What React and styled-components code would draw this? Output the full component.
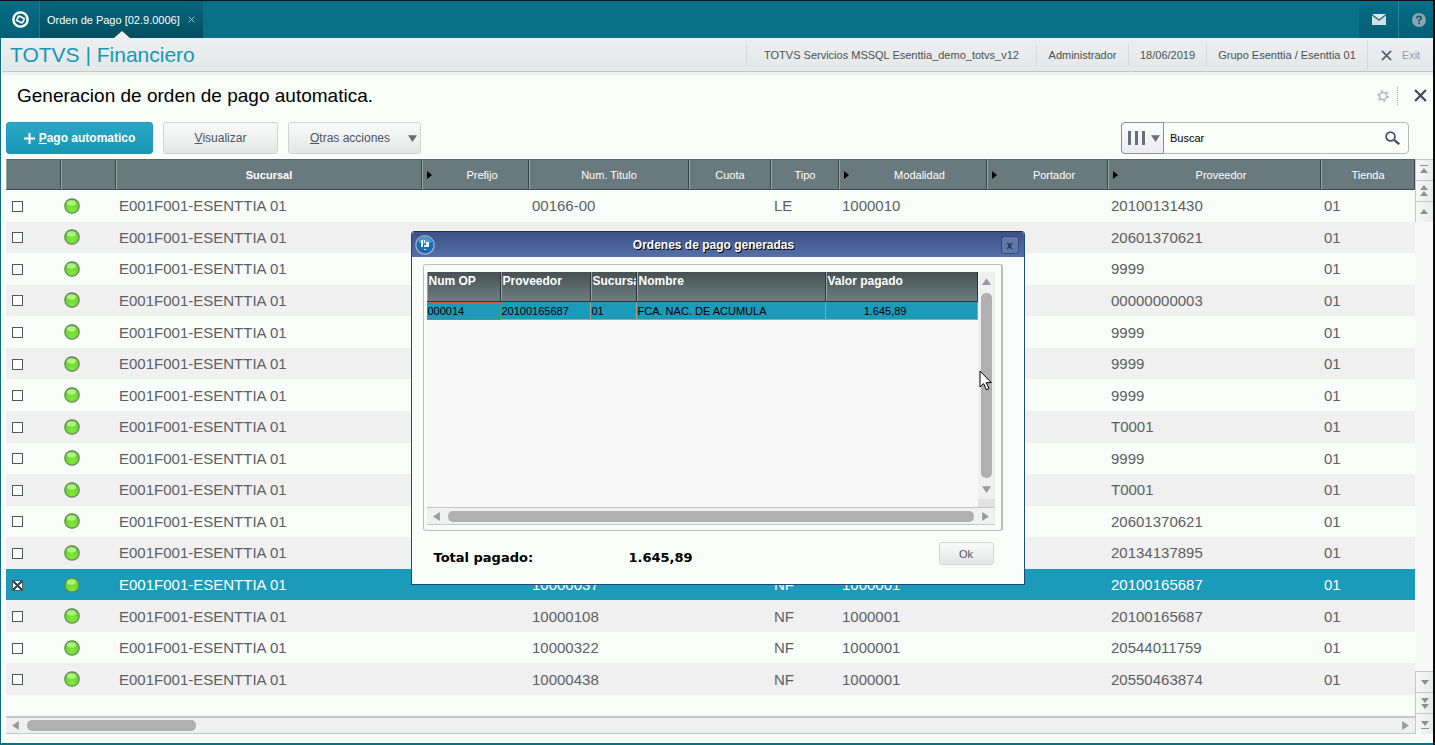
import React, {useState} from "react";
import styled, {createGlobalStyle} from 'styled-components';

const GlobalStyle = createGlobalStyle`
  * {
    box-sizing: border-box;
  }

  body {
    margin: 0;
    background: #f8fdfa;
    font-family: "Liberation Sans", Arial, sans-serif;
    font-size: 11px;
    color: #4a5254;
  }

  button, input {
    font-family: inherit;
  }
`;

const Page = styled.div`
  display: flex;
  flex-direction: column;
  height: 100vh;
  min-height: 640px;
  border-top: 1px solid #101418;
  border-right: 2px solid #0a0a0a;
`;

const TopBar = styled.header`
  display: flex;
  height: 37px;
  flex-shrink: 0;
  background: #09708a;
`;

const TopButton = styled.button`
  display: flex;
  align-items: center;
  justify-content: center;
  width: ${({$width}) => $width}px;
  padding: 0 0 0 ${({$divided}) => ($divided ? 5 : 0)}px;
  border: none;
  border-left: 1px solid ${({$divided}) => ($divided ? '#2b8398' : 'transparent')};
  background: linear-gradient(#066d86, #035f76);
`;

const Tab = styled.div`
  position: relative;
  display: flex;
  align-items: center;
  gap: 8px;
  width: 164px;
  padding-left: 7px;
  border-left: 1px solid #2b7486;
  background: linear-gradient(#07677f, #024e5e);
  color: #fff;
  white-space: nowrap;

  &::after {
    content: "";
    position: absolute;
    bottom: 0;
    left: 74px;
    border: 8px solid transparent;
    border-top: none;
    border-bottom: 7px solid #f0f0f2;
  }
`;

const PlainButton = styled.button`
  display: flex;
  align-items: center;
  justify-content: center;
  padding: 0;
  border: none;
  background: none;
  color: inherit;
  font-size: 11px;
`;

const Spacer = styled.div`
  flex: 1;
`;

const Body = styled.div`
  display: flex;
  flex-direction: column;
  flex: 1;
  min-height: 0;
  border-left: 1px solid #09708a;
  border-bottom: 2px solid #09708a;
`;

const SubHeader = styled.div`
  display: flex;
  align-items: center;
  justify-content: space-between;
  height: 37px;
  flex-shrink: 0;
  margin-left: 1px;
  border-bottom: 3px solid #f0f0f0;
  background: linear-gradient(#eeeef0, #e3e8e8);
  box-shadow: inset 0 -1px #c3c6ca;
`;

const Brand = styled.h1`
  margin: 0 0 0 8px;
  font-size: 21px;
  font-weight: normal;
  color: #1598b5;
`;

const Info = styled.div`
  display: grid;
  grid-template-columns: 290px 92px 78px 161px 66px;
  align-items: center;
  align-self: stretch;
`;

const InfoItem = styled.div`
  display: flex;
  align-items: center;
  justify-content: center;
  gap: 10px;
  height: ${({$tall}) => ($tall ? 30 : 20)}px;
  border-left: 1px solid #d6dad6;
  white-space: nowrap;

  button {
    color: #989da5;
    gap: 10px;
  }
`;

const TitleRow = styled.div`
  display: flex;
  align-items: center;
  height: 47px;
  flex-shrink: 0;
  padding: 0 6px 6px 16px;
`;

const Title = styled.h2`
  flex: 1;
  margin: 0;
  font-size: 19px;
  font-weight: normal;
  color: #000;
`;

const DottedLine = styled.div`
  height: 18px;
  margin: 0 16px 0 8px;
  border-left: 1px dotted #b0b4b4;
`;

const Toolbar = styled.div`
  display: flex;
  gap: 10px;
  height: 32px;
  flex-shrink: 0;
  margin: 0 24px 5px 5px;
`;

const Button = styled.button`
  display: flex;
  align-items: center;
  justify-content: center;
  gap: 4px;
  width: ${({$width}) => $width}px;
  padding: 0;
  border: 1px solid ${({$primary}) => ($primary ? '#2399b8' : '#d2d5d5')};
  border-radius: 3px;
  background: ${({$primary}) => ($primary ? 'linear-gradient(#2ba8c6, #1696b5)' : 'linear-gradient(#fafafa, #e4e6e6)')};
  color: ${({$primary}) => ($primary ? '#fff' : '#4c5560')};
  font-size: 12px;
  font-weight: ${({$primary}) => ($primary ? 'bold' : 'normal')};
`;

const MenuButton = styled(Button)`
  justify-content: space-between;
  padding: 0 3px 0 21px;
`;

const Search = styled.div`
  display: flex;
  width: 288px;
  border: 1px solid #b4b9ba;
  border-radius: 4px;
  background: #fbfdfb;
`;

const ColumnPicker = styled.button`
  display: flex;
  align-items: center;
  gap: 6px;
  width: 43px;
  padding: 0 0 0 6px;
  border: 1px solid #8c9293;
  border-radius: 4px 0 0 4px;
  margin: -1px 0 -1px -1px;
  background: linear-gradient(#fdfdfd, #ececef);
`;

const SearchInput = styled.input`
  flex: 1;
  min-width: 0;
  padding: 0 6px;
  border: none;
  background: none;
  font-size: 11px;
  color: #000;
  outline: none;

  &::placeholder {
    color: #000;
    opacity: 1;
  }
`;

const SearchButton = styled(PlainButton)`
  width: 32px;
`;

const GridArea = styled.div`
  display: flex;
  flex: 1;
  min-height: 0;
  margin: 0 0 9px 5px;
`;

const GridMain = styled.div`
  display: flex;
  flex-direction: column;
  flex: 1;
  min-width: 0;
`;

const TableBox = styled.div`
  flex: 1;
  min-height: 0;
  margin-bottom: 21px;
`;

const DataTable = styled.table`
  width: 100%;
  height: 100%;
  table-layout: fixed;
  border-collapse: separate;
  border-spacing: 0;
`;

const HeadCell = styled.th`
  height: 31px;
  padding: 0;
  border-top: 1px solid #56666a;
  border-bottom: 1px solid #3b474a;
  border-left: 1px solid #98a4a6;
  border-right: 1px solid #3b474a;
  background: #687a7e;
  color: #fff;
  font-weight: ${({$bold}) => ($bold ? 'bold' : 'normal')};

  > div {
    display: flex;
    align-items: center;
    justify-content: center;
    gap: 4px;
  }

  span {
    flex: 1;
    text-align: center;
  }

  svg {
    margin-left: 4px;
  }
`;

const Row = styled.tr`
  background: ${({$selected}) => ($selected ? '#1b9bba' : '#f8fdfa')};
  color: ${({$selected}) => ($selected ? '#fff' : '#5c6063')};

  &:nth-child(even) {
    background: #f0f0f0;
  }
`;

const Cell = styled.td`
  padding: 0 0 0 ${({$indent}) => $indent || 3}px;
  font-size: 15px;
  line-height: 17px;
  white-space: nowrap;
  overflow: hidden;

  svg {
    display: block;
  }
`;

const CheckBox = styled.input`
  appearance: none;
  display: block;
  width: 11px;
  height: 11px;
  margin: 1px 0 0;
  border: 1px solid #50585a;
  background: #fff;

  &:checked {
    background:
      linear-gradient(45deg, transparent 42%, #1c5464 42% 58%, transparent 58%),
      linear-gradient(-45deg, transparent 42%, #1c5464 42% 58%, transparent 58%),
      #fff;
  }
`;

const HScroll = styled.div`
  display: flex;
  align-items: center;
  flex-shrink: 0;
  gap: ${({$gap}) => $gap}px;
  height: 18px;
  padding: 0 5px;
  border-top: ${({$edge}) => $edge}px solid #c2c9c8;
  border-bottom: 1px solid #c2c9c8;
  background: #f0f0f0;
`;

const Thumb = styled.div`
  ${({$size}) => ($size ? `width: ${$size}px;` : 'flex: 1;')}
  ${({$vertical}) => ($vertical ? 'width: 11px;' : 'height: 11px;')}
  border-radius: 5px;
  background: #b0b0b0;
`;

const SideBar = styled.div`
  display: flex;
  flex-direction: column;
  width: 18px;
  background: #f8f8f8;
`;

const SideButton = styled.button`
  display: flex;
  align-items: center;
  justify-content: center;
  width: 18px;
  height: 21px;
  padding: 0;
  border: 1px solid #c2c9c8;
  border-width: 1px 0 0 1px;
  background: linear-gradient(90deg, #f8f8f8, #e8ebe9);
`;

const Dialog = styled.div`
  position: absolute;
  top: 231px;
  left: 50%;
  width: 614px;
  margin-left: -307px;
  border: 1px solid #1c4c7c;
  border-top-color: #2a3040;
  border-radius: 4px 4px 0 0;
  background: #f8fdfa;
  overflow: hidden;
`;

const DialogHead = styled.div`
  display: flex;
  align-items: center;
  height: 25px;
  padding: 0 5px 0 3px;
  background: linear-gradient(#3f5184, #546fa8);
  color: #fff;
`;

const DialogTitle = styled.h3`
  flex: 1;
  margin: 0;
  padding-right: 8px;
  text-align: center;
  font-size: 12px;
  text-shadow: 1px 1px #000;
`;

const DialogClose = styled(PlainButton)`
  width: 18px;
  height: 18px;
  border: 1px solid #34477c;
  border-radius: 3px;
  background: #6078a8;
  color: #1e2c4c;
  font-weight: bold;
`;

const Frame = styled.div`
  margin: 7px 21px 0 11px;
  padding: 7px 6px 5px 3px;
  border: 1px solid #bcc0be;
  border-right-width: 2px;
  border-radius: 3px;
`;

const FrameBody = styled.div`
  display: flex;
  height: 235px;
  background: #f8f8f8;
`;

const OrderBox = styled.div`
  flex: 1;
`;

const OrderTable = styled.table`
  width: 100%;
  table-layout: fixed;
  border-collapse: separate;
  border-spacing: 0;

  th {
    height: 30px;
    padding: 2px 0 0 2px;
    border-right: 1px solid #2e3637;
    border-bottom: 1px solid #2e3637;
    background: linear-gradient(#475052, #6d7f80);
    box-shadow: inset 1px 0 #98a4a4;
    color: #fff;
    font-size: 12px;
    text-align: left;
    vertical-align: top;
    white-space: nowrap;
    overflow: hidden;
  }

  td {
    height: 18px;
    padding: 0 0 0 1px;
    border-right: 1px solid #a0a0a0;
    border-bottom: 1px solid #a0a0a0;
    background: #1b9bba;
    color: #000;
    white-space: nowrap;
  }

  td:first-child {
    border: 1px dotted #f0602c;
    padding: 0;
  }

  td:last-child {
    padding-right: 70px;
    text-align: right;
  }
`;

const VScroll = styled.div`
  display: flex;
  flex-direction: column;
  align-items: center;
  gap: 7px;
  width: 17px;
  padding: 5px 0 5px;
  border-bottom: 8px solid #e2e2e2;
  background: #f0f0f0;
`;

const DialogFoot = styled.div`
  display: flex;
  align-items: center;
  height: 53px;
  padding: 0 30px 0 22px;
`;

const Total = styled.div`
  width: ${({$width}) => $width}px;
  color: #000;
  font-family: "DejaVu Sans", sans-serif;
  font-size: 13px;
  font-weight: bold;
`;

const OkButton = styled(Button)`
  height: 23px;
  margin: 0 0 8px auto;
  font-size: 11px;
`;

const Pointer = styled.svg`
  position: absolute;
  top: 138px;
  left: 567px;
`;

const turns = {up: 0, right: 90, down: 180, left: 270};

const Arrow = ({to, size = 9, color = '#979b9b'}) => (
    <svg width={size} height={size} viewBox="0 0 8 8" style={{transform: `rotate(${turns[to]}deg)`}}>
        <path d="M4 1 8 7H0z" fill={color}/>
    </svg>
);

const EdgeArrow = ({kind, down}) => (
    <svg width="9" height="12" viewBox="0 0 9 12" style={{transform: down ? 'rotate(180deg)' : 'none'}}>
        {kind === 'end' && <path d="M0 1h8v1H0zM4 4 8 9H0z" fill="#8c9191"/>}
        {kind === 'page' && <path d="M4 0 8 5H0zM4 6 8 11H0z" fill="#8c9191"/>}
        {kind === 'line' && <path d="M4 3 8 8H0z" fill="#8c9191"/>}
    </svg>
);

const Cross = ({size, color, width = 2}) => (
    <svg width={size} height={size} viewBox="0 0 12 12">
        <path d="M1 1 11 11M11 1 1 11" stroke={color} strokeWidth={width} fill="none"/>
    </svg>
);

const Light = () => (
    <svg width="16" height="16" viewBox="0 0 16 16">
        <defs>
            <radialGradient id="light" cx="50%" cy="75%" r="75%">
                <stop offset="0" stopColor="#84e83c"/>
                <stop offset="1" stopColor="#5cd024"/>
            </radialGradient>
        </defs>
        <circle cx="8" cy="8" r="7.2" fill="url(#light)" stroke="#5f8058" strokeWidth="1.2"/>
        <ellipse cx="7.5" cy="5" rx="4.5" ry="2.8" fill="#c6f8a0" opacity="0.75"/>
    </svg>
);

const Logo = () => (
    <svg width="17" height="17" viewBox="0 0 16 16" fill="none" stroke="#fff">
        <circle cx="8" cy="8" r="6.7" strokeWidth="2.3"/>
        <path
            transform="rotate(28 8 8)"
            d="M5 9.4V7Q5 5.6 6.4 5.6H11.6M11 6.6V9Q11 10.4 9.6 10.4H4.4"
            strokeWidth="1.7"
        />
    </svg>
);

const columns = [
    {name: '', width: 55},
    {name: '', width: 55},
    {name: 'Sucursal', bold: true},
    {name: 'Prefijo', width: 107, arrow: true},
    {name: 'Num. Titulo', width: 160},
    {name: 'Cuota', width: 82},
    {name: 'Tipo', width: 68},
    {name: 'Modalidad', width: 148, arrow: true},
    {name: 'Portador', width: 121, arrow: true},
    {name: 'Proveedor', width: 213, arrow: true},
    {name: 'Tienda', width: 94},
];

const initialRows = [
    {titulo: '00166-00', tipo: 'LE', modalidad: '1000010', proveedor: '20100131430'},
    {proveedor: '20601370621'},
    {proveedor: '9999'},
    {proveedor: '00000000003'},
    {proveedor: '9999'},
    {proveedor: '9999'},
    {proveedor: '9999'},
    {proveedor: 'T0001'},
    {proveedor: '9999'},
    {proveedor: 'T0001'},
    {proveedor: '20601370621'},
    {proveedor: '20134137895'},
    {titulo: '10000037', tipo: 'NF', modalidad: '1000001', proveedor: '20100165687', selected: true},
    {titulo: '10000108', tipo: 'NF', modalidad: '1000001', proveedor: '20100165687'},
    {titulo: '10000322', tipo: 'NF', modalidad: '1000001', proveedor: '20544011759'},
    {titulo: '10000438', tipo: 'NF', modalidad: '1000001', proveedor: '20550463874'},
];

const Header = () => (
    <TopBar>
        <TopButton $width={39} aria-label="Inicio"><Logo/></TopButton>
        <Tab>
            Orden de Pago [02.9.0006]
            <PlainButton aria-label="Cerrar"><Cross size={7} color="#a8c8d0" width={1.6}/></PlainButton>
        </Tab>
        <Spacer/>
        <TopButton $width={39} aria-label="Mensajes">
            <svg width="14" height="11" viewBox="0 0 14 11">
                <path d="M0 0h14L7 5.2z" fill="#e0e8ea"/>
                <path d="M0 1.6 7 6.8l7-5.2V11H0z" fill="#d4dde0"/>
            </svg>
        </TopButton>
        <TopButton $width={35} $divided aria-label="Ayuda">
            <svg width="14" height="14" viewBox="0 0 14 14">
                <circle cx="7" cy="7" r="7" fill="#8fa4aa"/>
                <path d="M4.8 5.4Q4.9 3.4 7 3.4T9.2 5.2Q9.2 6.3 7.1 7.2V8.4M7.1 9.6v1.6" fill="none" stroke="#0a5f74" strokeWidth="1.7"/>
            </svg>
        </TopButton>
    </TopBar>
);

const OrdersDialog = ({onClose}) => (
    <Dialog role="dialog" aria-labelledby="orders-title">
        <DialogHead>
            <svg width="20" height="20" viewBox="0 0 20 20">
                <circle cx="10" cy="10" r="9.2" fill="#1a6cb0" stroke="#9cacc4" strokeWidth="1.4"/>
                <path d="M3 7Q5 2 10 2t7 5q-7 4-14 0z" fill="#5cb4e4" opacity="0.7"/>
                <path d="M6 5h2v7H6zM9 5h1v3H9zM11 7h3v5H9v-2h2zM9 14h2v1H9z" fill="#e8f4fc"/>
            </svg>
            <DialogTitle id="orders-title">Ordenes de pago generadas</DialogTitle>
            <DialogClose onClick={onClose}>x</DialogClose>
        </DialogHead>
        <Frame>
            <FrameBody>
                <OrderBox>
                    <OrderTable>
                        <colgroup>
                            <col width="74"/>
                            <col width="90"/>
                            <col width="46"/>
                            <col width="189"/>
                            <col/>
                        </colgroup>
                        <thead>
                            <tr>
                                <th>Num OP</th>
                                <th>Proveedor</th>
                                <th>Sucursal</th>
                                <th>Nombre</th>
                                <th>Valor pagado</th>
                            </tr>
                        </thead>
                        <tbody>
                            <tr>
                                <td>000014</td>
                                <td>20100165687</td>
                                <td>01</td>
                                <td>FCA. NAC. DE ACUMULA</td>
                                <td>1.645,89</td>
                            </tr>
                        </tbody>
                    </OrderTable>
                </OrderBox>
                <VScroll>
                    <Arrow to="up"/>
                    <Thumb $vertical/>
                    <Arrow to="down"/>
                </VScroll>
            </FrameBody>
            <HScroll $gap={7} $edge={1}>
                <Arrow to="left"/>
                <Thumb/>
                <Arrow to="right"/>
            </HScroll>
        </Frame>
        <DialogFoot>
            <Total $width={195}>Total pagado:</Total>
            <Total>1.645,89</Total>
            <OkButton $width={55} onClick={onClose}>Ok</OkButton>
        </DialogFoot>
        <Pointer width="13" height="21" viewBox="0 0 13 21">
            <path d="M1 1v16l3.6-3.4 2.8 6.2 2.6-1.2-2.8-6h5z" fill="#fff" stroke="#000"/>
        </Pointer>
    </Dialog>
);

const App = () => {
    const [rows, setRows] = useState(initialRows);
    const [open, setOpen] = useState(true);
    const [search, setSearch] = useState('');

    const toggle = (index) => {
        setRows(rows.map((row, i) => (i === index ? {...row, selected: !row.selected} : row)));
    };

    return (
        <Page>
            <GlobalStyle/>
            <Header/>
            <Body>
                <SubHeader>
                    <Brand>TOTVS | Financiero</Brand>
                    <Info>
                        <InfoItem>TOTVS Servicios MSSQL Esenttia_demo_totvs_v12</InfoItem>
                        <InfoItem>Administrador</InfoItem>
                        <InfoItem>18/06/2019</InfoItem>
                        <InfoItem>Grupo Esenttia / Esenttia 01</InfoItem>
                        <InfoItem $tall>
                            <PlainButton><Cross size={11} color="#5c6470"/>Exit</PlainButton>
                        </InfoItem>
                    </Info>
                </SubHeader>
                <TitleRow>
                    <Title>Generacion de orden de pago automatica.</Title>
                    <PlainButton aria-label="Configurar">
                        <svg width="12" height="12" viewBox="0 0 12 12" fill="none" stroke="#b4b9bc">
                            <circle cx="6" cy="6" r="3.6" strokeWidth="1.5"/>
                            <circle cx="6" cy="6" r="5.1" strokeWidth="1.7" strokeDasharray="2 3.34"/>
                        </svg>
                    </PlainButton>
                    <DottedLine/>
                    <PlainButton aria-label="Cerrar"><Cross size={13} color="#3c4858"/></PlainButton>
                </TitleRow>
                <Toolbar>
                    <Button $primary $width={147} onClick={() => setOpen(true)}>
                        <svg width="11" height="11" viewBox="0 0 11 11">
                            <path d="M5.5 0v11M0 5.5h11" stroke="#fff" strokeWidth="2"/>
                        </svg>
                        <span><u>P</u>ago automatico</span>
                    </Button>
                    <Button $width={115}><span><u>V</u>isualizar</span></Button>
                    <MenuButton $width={133}>
                        <span><u>O</u>tras acciones</span>
                        <Arrow to="down" color="#687078"/>
                    </MenuButton>
                    <Spacer/>
                    <Search>
                        <ColumnPicker aria-label="Columnas">
                            <svg width="17" height="14" viewBox="0 0 17 14">
                                <path d="M0 0h3v14H0zM7 0h3v14H7zM14 0h3v14h-3z" fill="#667080"/>
                            </svg>
                            <Arrow to="down" color="#687078"/>
                        </ColumnPicker>
                        <SearchInput
                            aria-label="Buscar"
                            placeholder="Buscar"
                            value={search}
                            onChange={(e) => setSearch(e.target.value)}
                        />
                        <SearchButton aria-label="Buscar">
                            <svg width="15" height="14" viewBox="0 0 15 14" fill="none" stroke="#485464">
                                <circle cx="5.5" cy="5.5" r="4.4" strokeWidth="1.7"/>
                                <path d="m8.8 8.6 5.4 4.6" strokeWidth="2.4"/>
                            </svg>
                        </SearchButton>
                    </Search>
                </Toolbar>
                <GridArea>
                    <GridMain>
                        <TableBox>
                            <DataTable>
                                <colgroup>
                                    {columns.map((column, i) => <col key={i} width={column.width}/>)}
                                </colgroup>
                                <thead>
                                    <tr>
                                        {columns.map((column, i) => (
                                            <HeadCell key={i} $bold={column.bold}>
                                                <div>
                                                    {column.arrow && (
                                                        <svg width="5" height="8" viewBox="0 0 5 8">
                                                            <path d="M0 0 5 4 0 8z" fill="#000"/>
                                                        </svg>
                                                    )}
                                                    <span>{column.name}</span>
                                                </div>
                                            </HeadCell>
                                        ))}
                                    </tr>
                                </thead>
                                <tbody>
                                    {rows.map((row, i) => (
                                        <Row key={i} $selected={row.selected}>
                                            <Cell $indent={6}>
                                                <CheckBox
                                                    type="checkbox"
                                                    aria-label={`Fila ${i + 1}`}
                                                    checked={!!row.selected}
                                                    onChange={() => toggle(i)}
                                                />
                                            </Cell>
                                            <Cell><Light/></Cell>
                                            <Cell>E001F001-ESENTTIA 01</Cell>
                                            <Cell/>
                                            <Cell>{row.titulo}</Cell>
                                            <Cell/>
                                            <Cell>{row.tipo}</Cell>
                                            <Cell>{row.modalidad}</Cell>
                                            <Cell/>
                                            <Cell>{row.proveedor}</Cell>
                                            <Cell>01</Cell>
                                        </Row>
                                    ))}
                                </tbody>
                            </DataTable>
                        </TableBox>
                        <HScroll $gap={7} $edge={2}>
                            <Arrow to="left"/>
                            <Thumb $size={169}/>
                            <Spacer/>
                            <Arrow to="right"/>
                        </HScroll>
                    </GridMain>
                    <SideBar>
                        <SideButton aria-label="Primero"><EdgeArrow kind="end"/></SideButton>
                        <SideButton aria-label="Pagina anterior"><EdgeArrow kind="page"/></SideButton>
                        <SideButton aria-label="Anterior"><EdgeArrow kind="line"/></SideButton>
                        <Spacer/>
                        <SideButton aria-label="Siguiente"><EdgeArrow kind="line" down/></SideButton>
                        <SideButton aria-label="Pagina siguiente"><EdgeArrow kind="page" down/></SideButton>
                        <SideButton aria-label="Ultimo"><EdgeArrow kind="end" down/></SideButton>
                    </SideBar>
                </GridArea>
            </Body>
            {open && <OrdersDialog onClose={() => setOpen(false)}/>}
        </Page>
    );
};

export default App;
